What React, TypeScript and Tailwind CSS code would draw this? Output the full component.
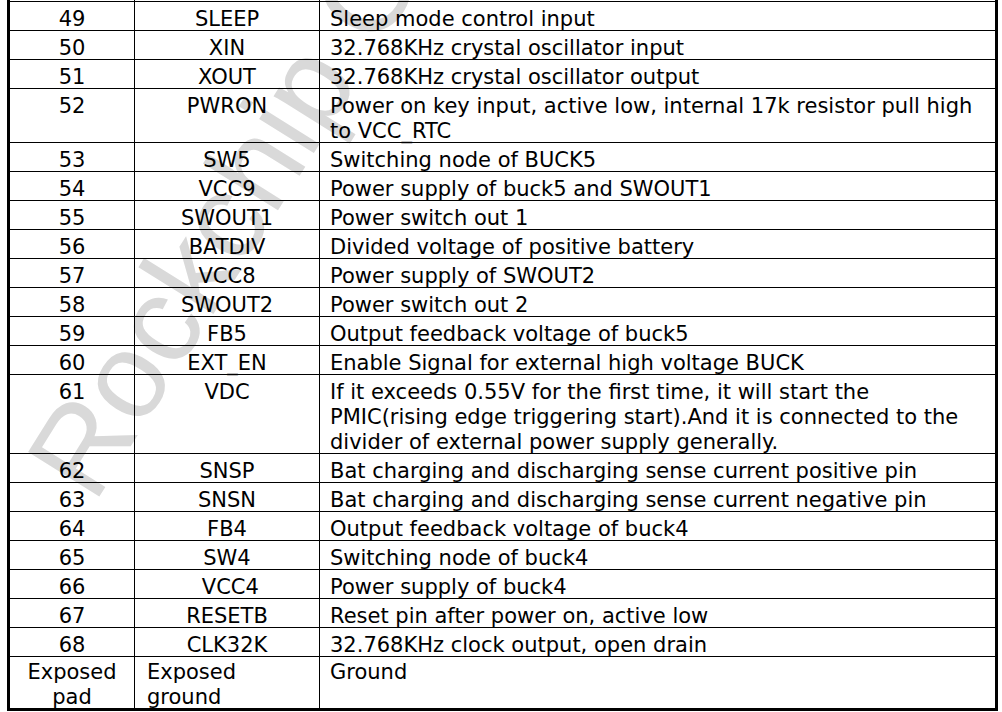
import React from "react";

type Row = { pin: React.ReactNode; name: React.ReactNode; desc: React.ReactNode };

const rows: Row[] = [
  { pin: "49", name: "SLEEP", desc: "Sleep mode control input" },
  { pin: "50", name: "XIN", desc: "32.768KHz crystal oscillator input" },
  { pin: "51", name: "XOUT", desc: "32.768KHz crystal oscillator output" },
  { pin: "52", name: "PWRON", desc: "Power on key input, active low, internal 17k resistor pull high to VCC_RTC" },
  { pin: "53", name: "SW5", desc: "Switching node of BUCK5" },
  { pin: "54", name: "VCC9", desc: "Power supply of buck5 and SWOUT1" },
  { pin: "55", name: "SWOUT1", desc: "Power switch out 1" },
  { pin: "56", name: "BATDIV", desc: "Divided voltage of positive battery" },
  { pin: "57", name: "VCC8", desc: "Power supply of SWOUT2" },
  { pin: "58", name: "SWOUT2", desc: "Power switch out 2" },
  { pin: "59", name: "FB5", desc: "Output feedback voltage of buck5" },
  { pin: "60", name: "EXT_EN", desc: "Enable Signal for external high voltage BUCK" },
  {
    pin: "61",
    name: "VDC",
    desc: "If it exceeds 0.55V for the first time, it will start the PMIC(rising edge triggering start).And it is connected to the divider of external power supply generally.",
  },
  { pin: "62", name: "SNSP", desc: "Bat charging and discharging sense current positive pin" },
  { pin: "63", name: "SNSN", desc: "Bat charging and discharging sense current negative pin" },
  { pin: "64", name: "FB4", desc: "Output feedback voltage of buck4" },
  { pin: "65", name: "SW4", desc: "Switching node of buck4" },
  { pin: "66", name: "\u00a0VCC4", desc: "Power supply of buck4" },
  { pin: "67", name: "RESETB", desc: "Reset pin after power on, active low" },
  { pin: "68", name: "CLK32K", desc: "32.768KHz clock output, open drain" },
];

function Watermark() {
  return (
    <svg
      className="pointer-events-none absolute left-0 top-0"
      width="1002"
      height="712"
      viewBox="0 0 1002 712"
    >
      <text
        x="0"
        y="0"
        transform="translate(94 505) rotate(-58)"
        fill="#d9d9d9"
        fontFamily="'Liberation Sans', Arial, sans-serif"
        fontSize="122"
      >
        Rockchip Confidential
      </text>
    </svg>
  );
}

export default function App() {
  return (
    <div
      className="relative h-[712px] w-[1002px] overflow-hidden bg-white text-black"
      style={{ fontFamily: "'DejaVu Sans', Verdana, sans-serif" }}
    >
      <Watermark />
      <div className="relative ml-[7px] w-[991px] border-x-[3px] border-b-[3px] border-black text-[21px] leading-[25px]">
        <div className="grid h-[2px] grid-cols-[124px_185px_1fr] border-b border-black">
          <div />
          <div className="border-l border-black" />
          <div className="border-l border-black" />
        </div>
        {rows.map((r, i) => (
          <div key={i} className="grid grid-cols-[124px_185px_1fr] border-b border-black">
            <div className="pt-[3px] text-center">
              <div className="relative top-[1.5px]">{r.pin}</div>
            </div>
            <div className="border-l border-black pt-[3px] text-center">
              <div className="relative top-[1.5px]">{r.name}</div>
            </div>
            <div className="border-l border-black pl-[10px] pr-[8px] pt-[3px]">
              <div className="relative top-[1.5px]">{r.desc}</div>
            </div>
          </div>
        ))}
        <div className="grid h-[51px] grid-cols-[124px_185px_1fr] leading-[25px]">
          <div className="text-center">
            <div className="relative top-[3px]">
              Exposed
              <br />
              pad
            </div>
          </div>
          <div className="border-l border-black pl-[12px]">
            <div className="relative top-[3px]">
              Exposed
              <br />
              ground
            </div>
          </div>
          <div className="border-l border-black pl-[10px]">
            <div className="relative top-[3px]">Ground</div>
          </div>
        </div>
      </div>
    </div>
  );
}
